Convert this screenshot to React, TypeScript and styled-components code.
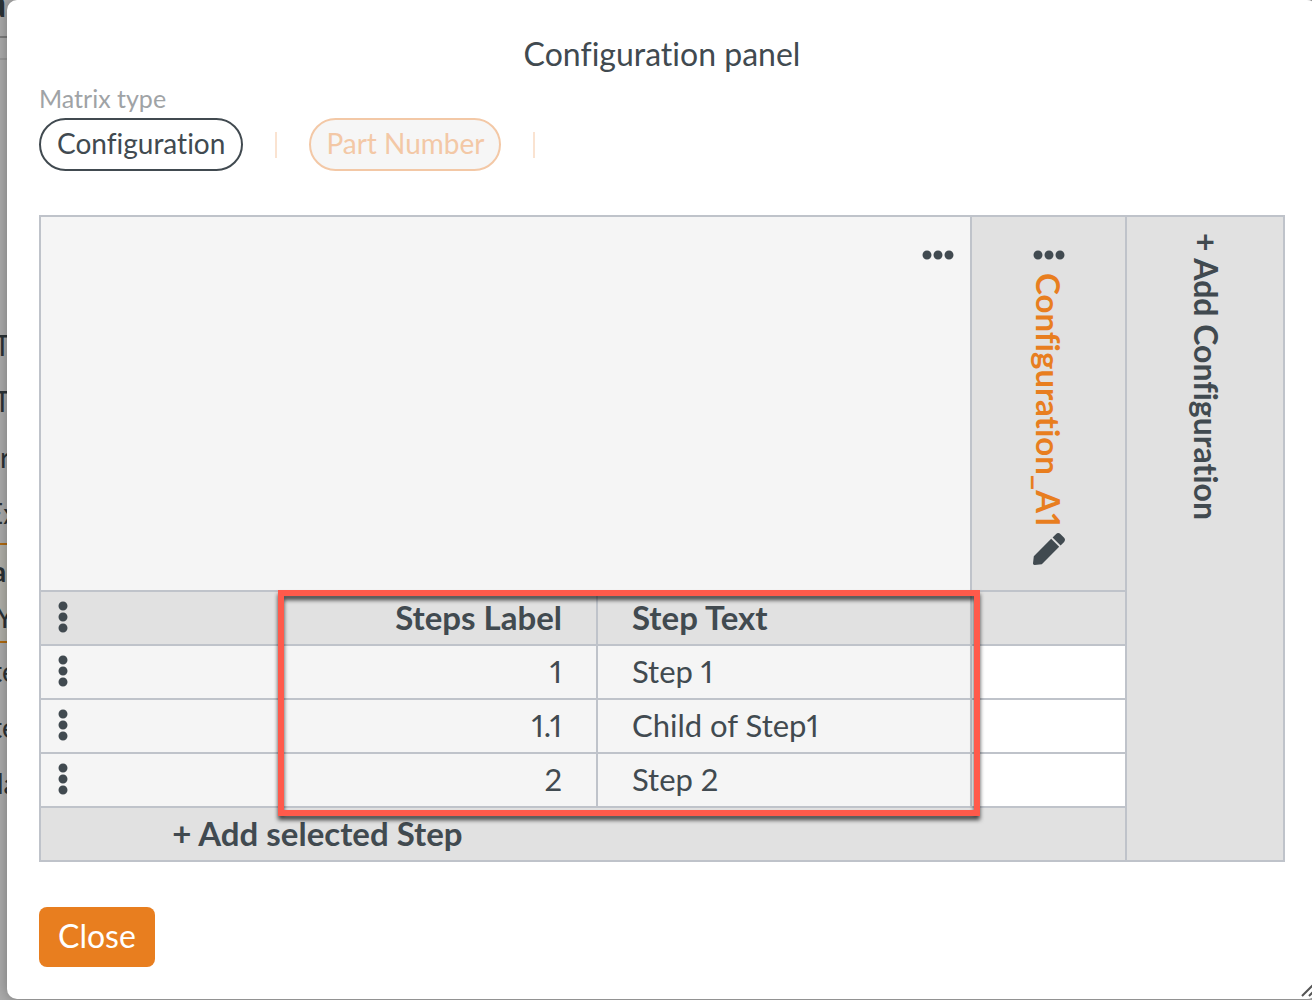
import React from "react";
import styled, { createGlobalStyle, css } from "styled-components";
import { FaEllipsisH, FaEllipsisV, FaPen } from "react-icons/fa";

const ink = "#414a50";
const accent = "#e87e1f";
const line = "#bfc3ca";
const light = "#f5f5f5";
const shade = "#e1e1e1";

const GlobalStyle = createGlobalStyle`
  * { box-sizing: border-box; }
  body {
    margin: 0;
    overflow: hidden;
    background: #ababab;
    color: ${ink};
    font-family: Lato, "Open Sans", sans-serif;
    font-size: 31px;
    line-height: 36px;
    font-variant-ligatures: none;
    font-variant-numeric: proportional-nums;
  }
  button {
    font: inherit;
    font-variant-ligatures: none;
    color: inherit;
    background: none;
    border: 0;
    padding: 0;
    cursor: pointer;
  }
`;

const Page = styled.div`
  display: flex;
  min-height: 100vh;
  overflow: hidden;
`;

const Backdrop = styled.aside`
  flex: 0 0 7px;
  display: flex;
  flex-direction: column;
  overflow: hidden;
  white-space: nowrap;
  color: #2b3235;
  font-size: 28px;
`;

const BackdropHeader = styled.div`
  height: 38px;
  border-bottom: 2px solid #7c7c7c;
  font-size: 40px;
  line-height: 4px;
  font-weight: 700;
  text-indent: -14px;
`;

const BackdropToolbar = styled.div`
  height: 22px;
  border-bottom: 2px solid #999;
  margin-bottom: 259px;
`;

const BackdropItem = styled.div<{ $shift: number; $bold?: boolean }>`
  height: 56px;
  line-height: 52px;
  text-indent: ${(p) => p.$shift}px;
  font-weight: ${(p) => (p.$bold ? 700 : 400)};
`;

const BackdropSelection = styled.div`
  height: 100px;
  margin-bottom: 2px;
  border: solid #b06a10;
  border-width: 2px 0;
  background: #b1b0a9;

  ${BackdropItem} {
    height: 46px;
  }
`;

const Dialog = styled.main`
  flex: 0 0 calc(100vw - 2px);
  height: fit-content;
  position: relative;
  padding: 36px 32px 32px;
  background: #fff;
  border-radius: 10px;
  box-shadow: 0 0 14px rgba(0, 0, 0, 0.3);
`;

const Title = styled.h1`
  margin: 0 0 12px;
  font-size: 32px;
  line-height: 36px;
  font-weight: 400;
  text-align: center;
`;

const Caption = styled.div`
  font-size: 25px;
  line-height: 28px;
  color: #9fa3a6;
  margin-bottom: 6px;
`;

const TypeList = styled.div`
  display: flex;
  align-items: center;
  margin-bottom: 44px;
`;

const TypeButton = styled.button<{ $muted?: boolean }>`
  height: 53px;
  padding: 0 ${(p) => (p.$muted ? 15 : 16)}px 4px;
  border: 2px solid ${ink};
  border-radius: 27px;
  font-size: 28px;
  ${(p) =>
    p.$muted &&
    css`
      color: #f3c8a6;
      border-color: #f3c8a6;
      background: #f6f6f6;
    `}
`;

const Divider = styled.span`
  width: 2px;
  height: 26px;
  margin: 0 32px;
  background: #fae3d1;
`;

const MatrixFrame = styled.section`
  position: relative;
  margin-bottom: 45px;
`;

const Matrix = styled.table`
  width: 100%;
  table-layout: fixed;
  border-collapse: separate;
  border-spacing: 2px;
  background: ${line};
`;

const Col = styled.col<{ $width?: number }>`
  width: ${(p) => (p.$width ? `${p.$width}px` : "auto")};
`;

const Cell = styled.td<{ $tone?: string }>`
  height: 52px;
  padding: 0 0 2px;
  background: ${(p) => p.$tone ?? light};
  text-align: left;
  vertical-align: middle;
  font-weight: inherit;
`;

const HeadCell = styled(Cell)`
  height: 373px;
  vertical-align: top;
`;

const Row = styled.tr<{ $bold?: boolean }>`
  font-size: ${(p) => (p.$bold ? 33 : 31)}px;
  font-weight: ${(p) => (p.$bold ? 700 : 400)};
`;

const LabelLine = styled.div`
  display: flex;
  align-items: center;
  justify-content: space-between;
  padding: 0 34px 0 6px;
`;

const StepText = styled.div`
  padding-left: 34px;
`;

const IconButton = styled.button`
  display: flex;
  font-size: 32px;
`;

const CornerTools = styled.div`
  display: flex;
  justify-content: flex-end;
  padding: 22px 16px;
`;

const ConfigHead = styled.div`
  display: flex;
  flex-direction: column;
  align-items: center;
  padding-top: 22px;
`;

const ConfigName = styled.span`
  writing-mode: vertical-rl;
  margin: 2px 0 6px;
  color: ${accent};
  font-size: 33px;
  font-weight: 700;
`;

const AddConfig = styled.button`
  display: block;
  writing-mode: vertical-rl;
  margin: 16px auto 0;
  padding-left: 2px;
  font-size: 32px;
  font-weight: 700;
`;

const AddStep = styled.button`
  width: 51%;
  font-size: 33px;
  font-weight: 700;
`;

const Highlight = styled.div`
  position: absolute;
  top: 375px;
  left: 239px;
  right: 305px;
  bottom: 46px;
  border: 6px solid #ff5a4b;
  filter: drop-shadow(0 4px 2px rgba(0, 0, 0, 0.7));
  pointer-events: none;
`;

const CloseButton = styled.button`
  display: block;
  height: 60px;
  padding: 0 19px 2px;
  border-radius: 8px;
  background: ${accent};
  color: #fff;
  font-size: 32px;
`;

const ResizeGrip = styled.svg`
  position: absolute;
  right: 0;
  bottom: 2px;
`;

const steps = [
  { label: "1", text: "Step 1" },
  { label: "1.1", text: "Child of Step1" },
  { label: "2", text: "Step 2" },
];

function RowMenu() {
  return (
    <IconButton aria-label="Row menu">
      <FaEllipsisV />
    </IconButton>
  );
}

export default function App() {
  return (
    <Page>
      <GlobalStyle />
      <Backdrop aria-hidden="true">
        <BackdropHeader>a</BackdropHeader>
        <BackdropToolbar />
        <BackdropItem $shift={-6}>T</BackdropItem>
        <BackdropItem $shift={-6}>T</BackdropItem>
        <BackdropItem $shift={0}>r</BackdropItem>
        <BackdropItem $shift={-13}>Ex</BackdropItem>
        <BackdropSelection>
          <BackdropItem $shift={-8} $bold>a</BackdropItem>
          <BackdropItem $shift={-4}>Y</BackdropItem>
        </BackdropSelection>
        <BackdropItem $shift={-8}>te</BackdropItem>
        <BackdropItem $shift={-8}>te</BackdropItem>
        <BackdropItem $shift={-3}>la</BackdropItem>
      </Backdrop>
      <Dialog role="dialog" aria-labelledby="panel-title">
        <Title id="panel-title">Configuration panel</Title>
        <Caption id="matrix-type">Matrix type</Caption>
        <TypeList role="group" aria-labelledby="matrix-type">
          <TypeButton aria-pressed="true">Configuration</TypeButton>
          <Divider />
          <TypeButton $muted aria-pressed="false">Part Number</TypeButton>
          <Divider />
        </TypeList>
        <MatrixFrame>
          <Matrix>
            <colgroup>
              <Col />
              <Col $width={372} />
              <Col $width={153} />
              <Col $width={156} />
            </colgroup>
            <tbody>
              <Row>
                <HeadCell colSpan={2}>
                  <CornerTools>
                    <IconButton aria-label="Steps menu">
                      <FaEllipsisH />
                    </IconButton>
                  </CornerTools>
                </HeadCell>
                <HeadCell as="th" scope="col" $tone={shade}>
                  <ConfigHead>
                    <IconButton aria-label="Configuration menu">
                      <FaEllipsisH />
                    </IconButton>
                    <ConfigName>Configuration_A1</ConfigName>
                    <IconButton aria-label="Edit configuration">
                      <FaPen />
                    </IconButton>
                  </ConfigHead>
                </HeadCell>
                <HeadCell rowSpan={6} $tone={shade}>
                  <AddConfig>+ Add Configuration</AddConfig>
                </HeadCell>
              </Row>
              <Row $bold>
                <Cell as="th" $tone={shade}>
                  <LabelLine>
                    <RowMenu />
                    Steps Label
                  </LabelLine>
                </Cell>
                <Cell as="th" $tone={shade}>
                  <StepText>Step Text</StepText>
                </Cell>
                <Cell $tone={shade} />
              </Row>
              {steps.map((step) => (
                <Row key={step.label}>
                  <Cell>
                    <LabelLine>
                      <RowMenu />
                      {step.label}
                    </LabelLine>
                  </Cell>
                  <Cell>
                    <StepText>{step.text}</StepText>
                  </Cell>
                  <Cell $tone="#fff" />
                </Row>
              ))}
              <Row>
                <Cell colSpan={3} $tone={shade}>
                  <AddStep>+ Add selected Step</AddStep>
                </Cell>
              </Row>
            </tbody>
          </Matrix>
          <Highlight />
        </MatrixFrame>
        <CloseButton>Close</CloseButton>
        <ResizeGrip width="16" height="16" viewBox="0 0 16 16" stroke="#555" strokeWidth="2">
          <path d="M1 15 L15 1 M8 15 L15 8" />
        </ResizeGrip>
      </Dialog>
    </Page>
  );
}
